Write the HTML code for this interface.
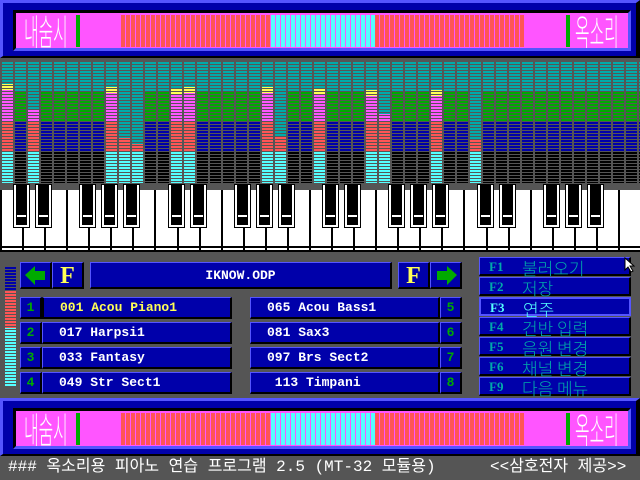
<!DOCTYPE html>
<html><head><meta charset="utf-8"><style>
*{margin:0;padding:0;box-sizing:border-box}
body{width:640px;height:480px;background:#555;position:relative;overflow:hidden;font-family:"Liberation Mono","Noto Sans CJK KR",monospace}
.a{position:absolute}
.ban{position:absolute;left:0;width:640px;height:58px;background:#0000aa;border-top:3px solid #5555ff;border-left:3px solid #5555ff;border-right:4px solid #000;border-bottom:2px solid #000}
.mag{position:absolute;left:10px;top:7px;width:618px;height:41px;background:#ff55ff;border-top:3px solid #000;border-left:3px solid #000;border-right:3px solid #5555ff;border-bottom:3px solid #5555ff}
.bars{position:absolute;top:2px;height:32px}
.red{background:repeating-linear-gradient(90deg,#ff5555 0 4px,#ff55ff 4px 5px)}
.cy{background:repeating-linear-gradient(90deg,#55ffff 0 4px,#ff55ff 4px 5px)}
.bt{position:absolute;top:-3px;color:#fff;font-size:36px;line-height:40px;white-space:nowrap;font-family:"Noto Sans CJK KR",sans-serif;font-weight:300;transform:scaleX(.44);transform-origin:left}
.gb{position:absolute;top:2px;width:4px;height:32px;background:#00aa00}
.box{position:absolute;background:#0000aa;border-top:1px solid #5555ff;border-left:1px solid #5555ff;border-right:2px solid #000;border-bottom:2px solid #000}
.nm{color:#fff;font-weight:bold;font-size:13px;line-height:20px;padding-left:16px;white-space:pre}
.num{color:#00aa00;font-weight:bold;font-size:13px;line-height:20px;text-align:center}
.mi{position:absolute;left:479px;width:152px;height:19px;background:#0000aa;border:1px solid #5555ff;border-right:2px solid #000;border-bottom:2px solid #000;color:#00aaaa;white-space:pre}
.mi b{position:absolute;left:9px;top:1px;font-size:13px;font-family:"Liberation Serif",serif}
.mi span{position:absolute;left:42px;top:-3px;font-size:17px;font-family:"Noto Sans CJK KR",sans-serif;font-weight:300}
.st{position:absolute;top:457px;color:#fff;font-size:16px;line-height:20px;white-space:pre;font-family:'Liberation Mono','Noto Sans CJK KR',monospace}
</style></head><body>
<div class="ban" style="top:0"><div class="mag">
<div class="bt" style="left:8px">내숨시</div><div class="gb" style="left:60px"></div>
<div class="bars red" style="left:105px;width:150px"></div><div class="bars cy" style="left:255px;width:104px"></div><div class="bars red" style="left:359px;width:150px"></div>
<div class="gb" style="left:550px"></div><div class="bt" style="left:559px">옥소리</div>
</div></div>
<div id="spec"></div>
<div id="kb" class="a" style="left:0;top:185px;width:640px;height:70px"></div>
<div class="a" style="left:5px;top:267px;width:11px;height:119px;background:repeating-linear-gradient(180deg,transparent 0 2px,#555 2px 3px),linear-gradient(180deg,#0000aa 0 23px,#ff5555 23px 61px,#55ffff 61px)"></div>
<div class="box" style="left:20px;top:262px;width:32px;height:27px"><svg width="30" height="25"><polygon points="4,12 14,3 14,8 24,8 24,17 14,17 14,22" fill="#00aa00"/></svg></div>
<div class="box" style="left:52px;top:262px;width:32px;height:27px;color:#ffff55;font:bold 24px 'Liberation Serif',serif;text-align:center;line-height:26px">F</div>
<div class="box" style="left:90px;top:262px;width:302px;height:27px;color:#fff;font-weight:bold;font-size:13px;text-align:center;line-height:25px">IKNOW.ODP</div>
<div class="box" style="left:398px;top:262px;width:32px;height:27px;color:#ffff55;font:bold 24px 'Liberation Serif',serif;text-align:center;line-height:26px">F</div>
<div class="box" style="left:430px;top:262px;width:32px;height:27px"><svg width="30" height="25"><polygon points="26,12 16,3 16,8 6,8 6,17 16,17 16,22" fill="#00aa00"/></svg></div>
<div id="rows"></div>
<div class="mi" style="top:257px"><b>F1</b><span>불러오기</span></div>
<div class="mi" style="top:277px"><b>F2</b><span>저장</span></div>
<div class="mi" style="top:297px;color:#55ffff;border-color:#5555ff;border-width:2px;background:#0000aa"><b>F3</b><span>연주</span></div>
<div class="mi" style="top:317px"><b>F4</b><span>건반 입력</span></div>
<div class="mi" style="top:337px"><b>F5</b><span>음원 변경</span></div>
<div class="mi" style="top:357px"><b>F6</b><span>채널 변경</span></div>
<div class="mi" style="top:377px"><b>F9</b><span>다음 메뉴</span></div>
<svg class="a" style="left:624px;top:257px" width="12" height="16"><polygon points="1,1 1,13 4,10 7,15 9,14 6,9 10,9" fill="#fff" stroke="#000" stroke-width="1"/></svg>
<div class="ban" style="top:398px"><div class="mag">
<div class="bt" style="left:8px">내숨시</div><div class="gb" style="left:60px"></div>
<div class="bars red" style="left:105px;width:150px"></div><div class="bars cy" style="left:255px;width:104px"></div><div class="bars red" style="left:359px;width:150px"></div>
<div class="gb" style="left:550px"></div><div class="bt" style="left:559px">옥소리</div>
</div></div>
<div class="st" style="left:8px">### 옥소리용 피아노 연습 프로그램 2.5 (MT-32 모듈용)</div>
<div class="st" style="left:490px">&lt;&lt;삼호전자 제공&gt;&gt;</div>
<script>
var s='';
var lv={0:84,2:110,8:87,9:138,10:144,13:89,14:87,20:87,21:137,24:89,28:90,29:114,33:90,36:140};
var st='repeating-linear-gradient(180deg,transparent 0 2px,#555 2px 3px)';
for(var i=0;i<50;i++){var x=2+i*13;var bg='linear-gradient(180deg,#00aaaa 0 30px,#00aa00 30px 60px,#0000aa 60px 90px,#000 90px)';
if(lv[i]){var t=lv[i]-62;
bg='linear-gradient(180deg,#00aaaa 0 '+t+'px,'+(t<30?'#ffff55 '+t+'px '+(t+6)+'px,#ff55ff '+(t+6)+'px 60px':'#00aa00 30px '+t+'px,'+(t<60?'#ff55ff '+t+'px 60px':'#0000aa 60px '+t+'px'))+',#ff5555 '+Math.max(60,t)+'px 90px,#55ffff 90px)';}
s+='<div class="a" style="left:'+x+'px;top:62px;width:11px;height:121px;background:'+st+','+bg+'"></div>';}
document.getElementById('spec').innerHTML=s;
var k='',w=22.07;
for(var i=0;i<29;i++){k+='<div class="a" style="left:'+Math.round(i*w)+'px;top:5px;width:'+(Math.round((i+1)*w)-Math.round(i*w))+'px;height:62px;background:#fff;border-left:2px solid #000;border-bottom:2px solid #000"><div class="a" style="left:0;right:0;top:56px;height:2px;background:#000"></div></div>';}
var bk=[0,1,3,4,5];
for(var i=0;i<29;i++){if(bk.indexOf(i%7)>=0&&i<28){var b=Math.round((i+1)*w);k+='<div class="a" style="left:'+(b-8)+'px;top:0;width:15px;height:42px;background:#000;border:2px solid #fff;border-top:none;outline:1px solid #000"><div class="a" style="left:1px;right:1px;top:30px;height:2px;background:#fff"></div></div>';}}
document.getElementById('kb').innerHTML=k;
var L=['001 Acou Piano1','017 Harpsi1','033 Fantasy','049 Str Sect1'],R=['065 Acou Bass1','081 Sax3','097 Brs Sect2','113 Timpani'];
var r='';
for(var i=0;i<4;i++){var y=297+i*25;
r+='<div class="box num" style="left:20px;top:'+y+'px;width:22px;height:22px">'+(i+1)+'</div>';
r+='<div class="box nm" style="left:42px;top:'+y+'px;width:190px;height:22px;'+(i==0?'color:#ffff55;border-left:2px solid #000':'')+'">'+L[i]+'</div>';
r+='<div class="box nm" style="left:250px;top:'+y+'px;width:190px;height:22px">'+(i==3?' ':'')+R[i]+'</div>';
r+='<div class="box num" style="left:440px;top:'+y+'px;width:22px;height:22px">'+(i+5)+'</div>';}
document.getElementById('rows').innerHTML=r;
</script>
</body></html>
